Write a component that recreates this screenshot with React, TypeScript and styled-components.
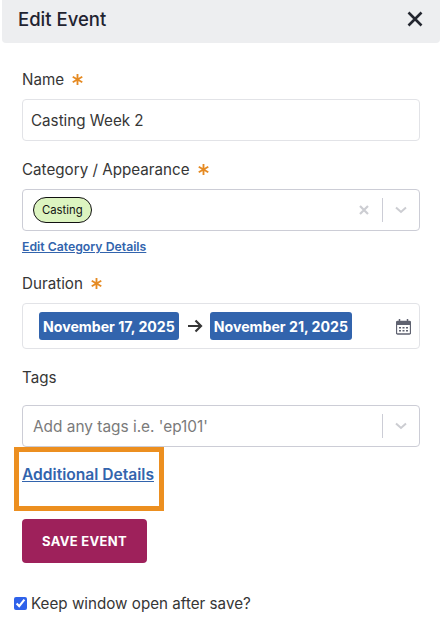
import React from 'react'
import styled, { createGlobalStyle } from 'styled-components'

const GlobalStyle = createGlobalStyle`
  html, body {
    margin: 0;
    padding: 0;
    background: #fff;
  }
  body {
    font-family: Inter, "Liberation Sans", sans-serif;
    color: #363636;
  }
`

const Page = styled.div`
  width: 442px;
  height: 632px;
  overflow: hidden;
  box-sizing: border-box;
`

const Header = styled.header`
  margin: 0 2px;
  height: 43px;
  box-sizing: border-box;
  padding: 0 17px 5px 16px;
  background: #edeef0;
  border-radius: 0 0 4px 4px;
  display: flex;
  align-items: center;
  justify-content: space-between;
`

const Title = styled.h1`
  margin: 0;
  font-size: 18.5px;
  font-weight: 500;
  color: #1f2330;
`

const CloseButton = styled.button`
  border: 0;
  background: none;
  padding: 0;
  width: 16px;
  height: 16px;
  display: flex;
`

const Form = styled.form`
  padding: 26px 22px 0;
  display: flex;
  flex-direction: column;
`

const Label = styled.label<{ $top?: number; $bottom?: number }>`
  display: flex;
  align-items: center;
  height: 20px;
  font-size: 15.2px;
  margin-top: ${p => p.$top ?? 0}px;
  margin-bottom: ${p => p.$bottom ?? 10}px;
`

const Required = styled.svg`
  margin-left: 7px;
  width: 13px;
  height: 13px;
`

const Field = styled.div<{ $height: number; $strong?: boolean }>`
  height: ${p => p.$height}px;
  box-sizing: border-box;
  border: 1px solid ${p => (p.$strong ? '#cccdd6' : '#e2e3e7')};
  border-radius: 4px;
  background: #fff;
  display: flex;
  align-items: center;
  font-size: 15.2px;
`

const TextValue = styled.span`
  padding-left: 8px;
  color: #363636;
`

const SelectValue = styled.div`
  flex: 1;
  padding-left: 10px;
  display: flex;
  align-items: center;
`

const Placeholder = styled.span`
  color: #7a7a7a;
  font-size: 15.4px;
`

const Pill = styled.span`
  height: 26px;
  box-sizing: border-box;
  padding: 0 8px;
  border: 1px solid #111;
  border-radius: 13px;
  background: #dcf4c0;
  color: #111;
  font-size: 11.3px;
  display: flex;
  align-items: center;
`

const Indicators = styled.div`
  display: flex;
  align-items: center;
  padding-right: 12px;
`

const Separator = styled.span`
  width: 1px;
  height: 24px;
  background: #cccdd6;
  margin: 0 12px 0 13px;
`

const SmallLink = styled.a`
  display: block;
  margin-top: 9px;
  height: 14px;
  line-height: 14px;
  font-size: 12.25px;
  font-weight: 600;
  color: #3264ad;
  text-decoration: underline;
`

const DateRow = styled.div`
  flex: 1;
  display: flex;
  align-items: center;
  padding: 0 8px 0 16px;
`

const DateChip = styled.span`
  height: 28px;
  padding: 0 4px;
  border-radius: 3px;
  background: #3264ad;
  color: #fff;
  font-size: 14.15px;
  font-weight: 700;
  display: flex;
  align-items: center;
  white-space: nowrap;
`

const Arrow = styled.svg`
  width: 16px;
  height: 14px;
  margin: 0 7px 0 8px;
`

const CalendarIcon = styled.svg`
  width: 15px;
  height: 17px;
  margin-left: auto;
`

const Highlight = styled.div`
  margin: 0 0 0 -8px;
  width: 150px;
  height: 64px;
  box-sizing: border-box;
  border: 5px solid #ec8f20;
  padding: 12px 3px 0;
`

const DetailsLink = styled.a`
  font-size: 15.6px;
  font-weight: 600;
  line-height: 22px;
  color: #3264ad;
  text-decoration: underline;
  white-space: nowrap;
`

const SaveButton = styled.button`
  margin-top: 8px;
  width: 125px;
  height: 44px;
  border: 0;
  border-radius: 4px;
  background: #9e215b;
  color: #fff;
  font-family: inherit;
  font-size: 13px;
  font-weight: 700;
  letter-spacing: 0.3px;
`

const KeepOpen = styled.label`
  margin: 31px 0 0 -8px;
  display: flex;
  align-items: center;
  font-size: 15.2px;
`

const Check = styled.input`
  margin: 0 4px 0 0;
  width: 13px;
  height: 13px;
  accent-color: #2f62ea;
`

const Star = () => (
  <Required viewBox="0 0 12 12">
    <path d="M6 1v10M1.6 3.400l8.800 5.200M10.400 3.400L1.600 8.600" stroke="#e58a22" strokeWidth="1.700" fill="none" />
  </Required>
)

const ClearIcon = () => (
  <svg width="10" height="10" viewBox="0 0 10 10">
    <path d="M1 1l8 8M9 1L1 9" stroke="#cccdd2" strokeWidth="2.200" fill="none" />
  </svg>
)

const Chevron = () => (
  <svg width="12" height="8" viewBox="0 0 12 8">
    <path d="M1 1.500l5 4.500 5-4.500" stroke="#cccdd2" strokeWidth="2" fill="none" />
  </svg>
)

export default function App() {
  return (
    <Page>
      <GlobalStyle />
      <Header>
        <Title>Edit Event</Title>
        <CloseButton type="button" aria-label="Close">
          <svg width="16" height="16" viewBox="0 0 16 16">
            <path d="M1.500 1.500l13 13M14.500 1.500l-13 13" stroke="#23262f" strokeWidth="2.600" fill="none" />
          </svg>
        </CloseButton>
      </Header>
      <Form>
        <Label>Name<Star /></Label>
        <Field $height={42}>
          <TextValue>Casting Week 2</TextValue>
        </Field>
        <Label $top={18}>Category / Appearance<Star /></Label>
        <Field $height={42} $strong>
          <SelectValue>
            <Pill>Casting</Pill>
          </SelectValue>
          <Indicators>
            <ClearIcon />
            <Separator />
            <Chevron />
          </Indicators>
        </Field>
        <SmallLink href="#">Edit Category Details</SmallLink>
        <Label $top={19}>Duration<Star /></Label>
        <Field $height={46}>
          <DateRow>
            <DateChip>November 17, 2025</DateChip>
            <Arrow viewBox="0 0 16 14">
              <path d="M1 7h13M8.500 1.500L14 7l-5.500 5.500" stroke="#363636" strokeWidth="2.200" fill="none" />
            </Arrow>
            <DateChip>November 21, 2025</DateChip>
            <CalendarIcon viewBox="0 0 15 17">
              <path d="M1.500 3.500h12a1 1 0 0 1 1 1v10.500a1 1 0 0 1-1 1h-12a1 1 0 0 1-1-1V4.500a1 1 0 0 1 1-1z" stroke="#5f6270" strokeWidth="1.300" fill="none" />
              <path d="M.5 4.500a1 1 0 0 1 1-1h12a1 1 0 0 1 1 1V7H.5z" fill="#5f6270" />
              <path d="M3.500 1v3M11.500 1v3" stroke="#5f6270" strokeWidth="1.500" />
              <path d="M3 9h2v1.500H3zM6.500 9h2v1.500h-2zM10 9h2v1.500h-2zM3 12h2v1.500H3zM6.500 12h2v1.500h-2zM10 12h2v1.500h-2z" fill="#5f6270" />
            </CalendarIcon>
          </DateRow>
        </Field>
        <Label $top={18} $bottom={18}>Tags</Label>
        <Field $height={42} $strong>
          <SelectValue>
            <Placeholder>Add any tags i.e. 'ep101'</Placeholder>
          </SelectValue>
          <Indicators>
            <Separator />
            <Chevron />
          </Indicators>
        </Field>
        <Highlight>
          <DetailsLink href="#">Additional Details</DetailsLink>
        </Highlight>
        <SaveButton type="button">SAVE EVENT</SaveButton>
        <KeepOpen>
          <Check type="checkbox" defaultChecked />
          Keep window open after save?
        </KeepOpen>
      </Form>
    </Page>
  )
}
